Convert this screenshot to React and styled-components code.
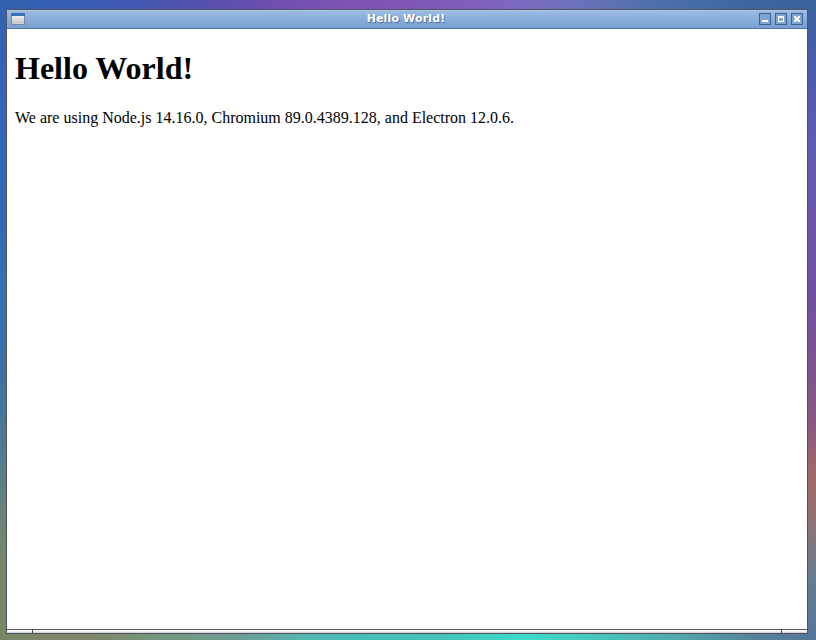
import React from 'react';
import styled, { createGlobalStyle } from 'styled-components';

const GlobalStyle = createGlobalStyle`
  * { box-sizing: border-box; }
  html, body { margin: 0; height: 100%; overflow: hidden; }
`;

const Desktop = styled.div`
  width: 816px;
  height: 640px;
  padding: 9px 8px 6px 6px;
  background:
    linear-gradient(90deg, #2f62b0 0, #3a5cb4 100px, #5350ae 200px, #704fb0 280px, #7d52b2 350px, #8058b6 430px, #7d66be 510px, #6672b8 590px, #4a6ea8 670px, #3c669e 760px, #3a629c 100%) 0 0 / 100% 9px no-repeat,
    linear-gradient(90deg, #748866 0, #80866a 60px, #7c8a6c 110px, #729a84 170px, #6c9c90 235px, #56b4ae 300px, #46beb8 350px, #44c4bc 450px, #3cdccc 525px, #46c8bc 590px, #50acae 670px, #54849c 750px, #56769a 100%) 0 100% / 100% 6px no-repeat,
    linear-gradient(180deg, #3062b0 0, #3464ba 80px, #3068b8 200px, #3670b4 290px, #3c70a4 370px, #507c90 450px, #6c8478 520px, #768866 580px, #748866 100%) 0 0 / 6px 100% no-repeat,
    linear-gradient(180deg, #3c629c 0, #4a5cae 70px, #625ab2 150px, #6c54a8 240px, #70509e 300px, #7c5290 360px, #885880 420px, #a26868 480px, #8a7478 530px, #647c90 580px, #56769a 100%) 100% 0 / 8px 100% no-repeat;
`;

const Window = styled.section`
  display: flex;
  flex-direction: column;
  width: 802px;
  height: 625px;
  border: 1px solid #53535b;
  background: #fff;
`;

const TitleBar = styled.header`
  display: grid;
  grid-template-columns: 47px 1fr 48px;
  align-items: start;
  height: 19px;
  padding: 0 4px 0 3px;
  border-top: 1px solid #a9c8ec;
  border-bottom: 1px solid #4b76ae;
  background: linear-gradient(#9bbbe2, #789fd0);
`;

const Title = styled.div`
  color: #fff;
  font: bold 11px/15px "DejaVu Sans", sans-serif;
  letter-spacing: 0.14px;
  text-align: center;
  text-shadow: 1px 1px 1px #46699a;
  white-space: nowrap;
`;

const WindowIcon = styled.svg`
  display: block;
  width: 16px;
  height: 16px;
`;

const Controls = styled.div`
  display: flex;
  justify-content: flex-end;
  gap: 4px;
  padding-top: 2px;
`;

const Control = styled.button`
  width: 12px;
  height: 12px;
  padding: 0;
  border: 1px solid #3f6190;
  background: #7fa5d6;

  svg { display: block; }
`;

const Content = styled.main`
  flex: 1;
  padding: 0 8px;
  overflow: hidden;
  color: #000;
  font: 16px "Liberation Serif", serif;
`;

const Heading = styled.h1`
  margin: 21px 0 22px;
  font-size: 32px;
  line-height: 37px;
`;

const Paragraph = styled.p`
  margin: 0;
  line-height: 18px;
`;

const ResizeBar = styled.footer`
  display: flex;
  height: 4px;
  border-top: 1px solid #53535b;
`;

const Grip = styled.div`
  width: ${({ $width }) => $width};
  flex: ${({ $width }) => ($width ? 'none' : 1)};
  background: linear-gradient(#fff 0 1px, #ebebf1 1px 2px, #d3d3dc 2px);

  & + & { border-left: 1px solid #45454b; }
`;

const controls = [
  { label: 'Minimize', path: 'M2 6h6v2H2z' },
  { label: 'Maximize', path: 'M2 2h6v6H2zM3 4v3h4V4z' },
  { label: 'Close', path: 'M2 2h2v1h2V2h2v2H7v2h1v2H6V7H4v1H2V6h1V4H2z' },
];

export default function App() {
  return (
    <>
      <GlobalStyle />
      <Desktop>
        <Window>
          <TitleBar>
            <WindowIcon viewBox="0 0 16 16" shapeRendering="crispEdges">
              <path fill="#6f86a6" d="M1 2h14v12H1z" />
              <path fill="#3e6eb5" d="M1 2h14v3H1z" />
              <path fill="#e9e9e9" d="M2 5h12v8H2z" />
              <path fill="#dadada" d="M2 7h12v3H2z" />
              <path fill="#cbccce" d="M2 10h12v3H2z" />
            </WindowIcon>
            <Title>Hello World!</Title>
            <Controls>
              {controls.map(({ label, path }) => (
                <Control key={label} aria-label={label}>
                  <svg width="10" height="10" viewBox="0 0 10 10">
                    <path fill="#fff" fillRule="evenodd" d={path} />
                  </svg>
                </Control>
              ))}
            </Controls>
          </TitleBar>
          <Content>
            <Heading>Hello World!</Heading>
            <Paragraph>We are using Node.js 14.16.0, Chromium 89.0.4389.128, and Electron 12.0.6.</Paragraph>
          </Content>
          <ResizeBar>
            <Grip $width="25px" />
            <Grip />
            <Grip $width="26px" />
          </ResizeBar>
        </Window>
      </Desktop>
    </>
  );
}
